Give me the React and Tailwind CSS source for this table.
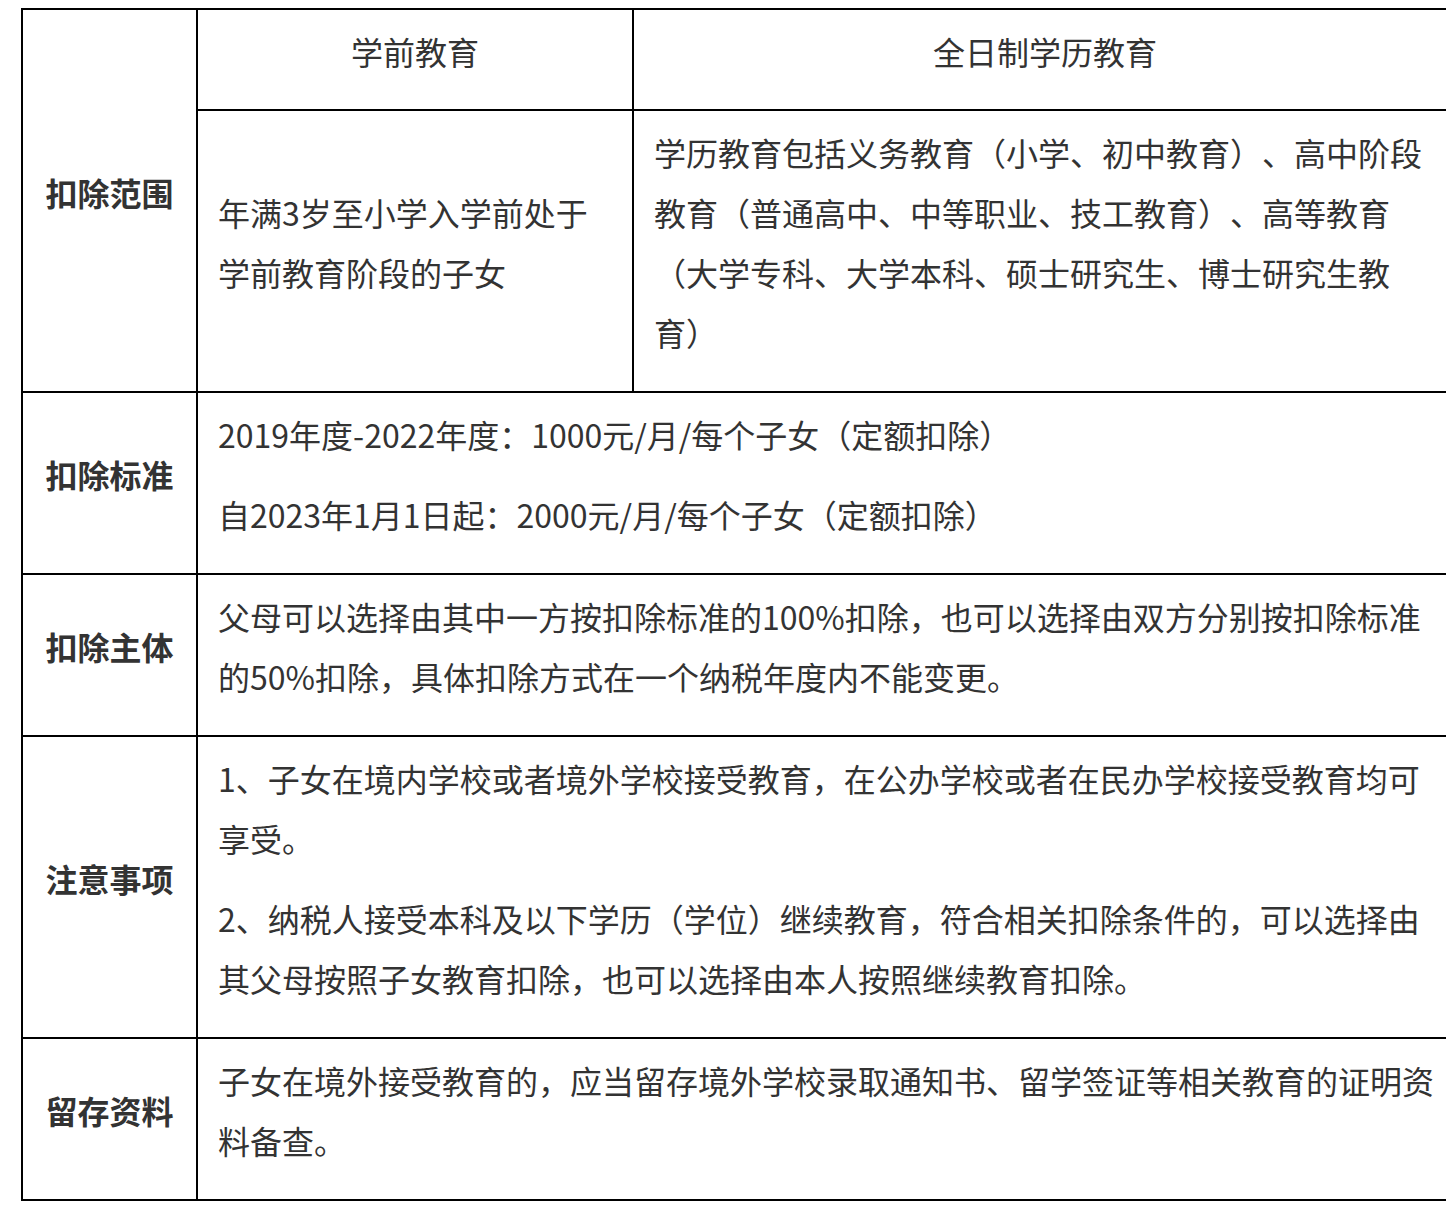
import React from 'react'

const FONT = { fontFamily: '"Noto Sans CJK SC", "Noto Sans", sans-serif' }

// Noto sits a bit lower than the original font, so padding is shifted up
const cell = 'border-r-2 border-b-2 border-black px-[20px] pt-[11px] pb-[29px] align-middle'
const label = `${cell} text-center font-bold`

export default function App() {
  return (
    <div className="w-full overflow-hidden bg-white pb-[6px]" style={FONT}>
      <table className="ml-[21px] mt-[8px] w-[1437px] table-fixed border-separate border-spacing-0 border-l-2 border-t-2 border-black text-[32px] leading-[60px] text-[#333] [text-spacing-trim:space-all]">
        <colgroup>
          <col className="w-[175px]" />
          <col className="w-[436px]" />
          <col className="w-[824px]" />
        </colgroup>
        <tbody>
          <tr>
            <td rowSpan={2} className={label}>扣除范围</td>
            <td className="border-r-2 border-b-2 border-black px-[20px] pt-[11px] pb-[28px] text-center align-middle">学前教育</td>
            <td className="border-r-2 border-b-2 border-black px-[20px] pt-[11px] pb-[28px] text-center align-middle">全日制学历教育</td>
          </tr>
          <tr>
            <td className={cell}>年满3岁至小学入学前处于学前教育阶段的子女</td>
            <td className={cell}>
              学历教育包括义务教育（小学、初中教育）、高中阶段教育（普通高中、中等职业、技工教育）、高等教育（大学专科、大学本科、硕士研究生、博士研究生教育）
            </td>
          </tr>
          <tr>
            <td className={label}>扣除标准</td>
            <td colSpan={2} className={cell}>
              <p>2019年度-2022年度：1000元/月/每个子女（定额扣除）</p>
              <p className="mt-[20px]">自2023年1月1日起：2000元/月/每个子女（定额扣除）</p>
            </td>
          </tr>
          <tr>
            <td className={label}>扣除主体</td>
            <td colSpan={2} className={cell}>
              父母可以选择由其中一方按扣除标准的100%扣除，也可以选择由双方分别按扣除标准的50%扣除，具体扣除方式在一个纳税年度内不能变更。
            </td>
          </tr>
          <tr>
            <td className={label}>注意事项</td>
            <td colSpan={2} className={cell}>
              <p>1、子女在境内学校或者境外学校接受教育，在公办学校或者在民办学校接受教育均可享受。</p>
              <p className="mt-[20px]">
                2、纳税人接受本科及以下学历（学位）继续教育，符合相关扣除条件的，可以选择由其父母按照子女教育扣除，也可以选择由本人按照继续教育扣除。
              </p>
            </td>
          </tr>
          <tr>
            <td className={label}>留存资料</td>
            <td colSpan={2} className={cell}>
              子女在境外接受教育的，应当留存境外学校录取通知书、留学签证等相关教育的证明资料备查。
            </td>
          </tr>
        </tbody>
      </table>
    </div>
  )
}
